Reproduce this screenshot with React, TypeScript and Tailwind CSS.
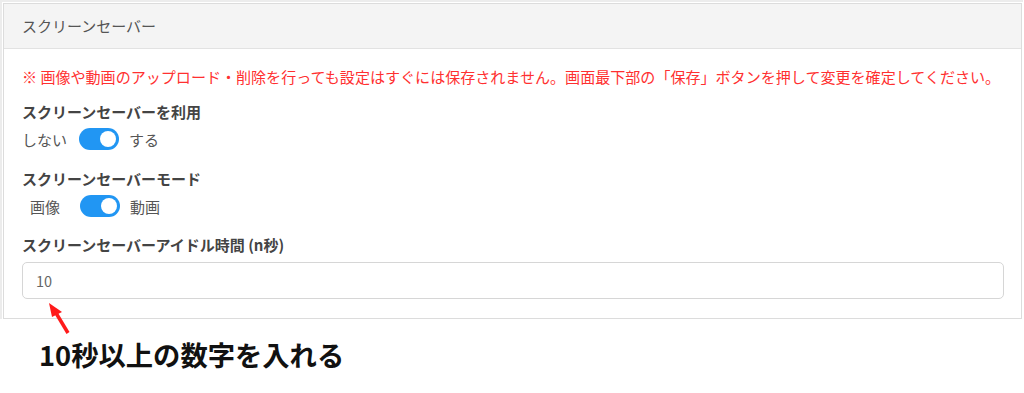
import React from 'react'

const jp = { fontFamily: '"Noto Sans CJK JP", "Noto Sans", sans-serif' }

function Toggle() {
  return (
    <span className="inline-flex items-center w-[40px] h-[22px] rounded-full bg-[#2196f3] px-[3px] justify-end">
      <span className="w-[16px] h-[16px] rounded-full bg-white" />
    </span>
  )
}

export default function App() {
  return (
    <div className="w-[1024px] h-[393px] bg-white text-[#444]" style={jp}>
      <div className="w-[1023px] border-2 border-[#ececec] border-r-0 border-b-0">
        <div className="border border-[#dcdcdc] w-[1019px] ml-[1px] mt-[1px]">
          <div className="h-[45px] bg-[#f4f4f4] border-b border-[#e2e2e2] flex items-center px-[18px] text-[15px] text-[#555]">
            スクリーンセーバー
          </div>
          <div className="px-[18px] pt-[17px] pb-[19px]">
            <p className="text-[15.05px] text-[#ff3030] leading-[22px] whitespace-nowrap">
              ※ 画像や動画のアップロード・削除を行っても設定はすぐには保存されません。画面最下部の「保存」ボタンを押して変更を確定してください。
            </p>
            <div className="mt-[14px] text-[15px] font-bold text-[#444] leading-[20px]">スクリーンセーバーを利用</div>
            <div className="mt-[6px] flex items-center text-[15px] text-[#555] h-[24px]">
              <span>しない</span>
              <span className="ml-[12px]"><Toggle /></span>
              <span className="ml-[10px]">する</span>
            </div>
            <div className="mt-[17px] text-[15px] font-bold text-[#444] leading-[20px]">スクリーンセーバーモード</div>
            <div className="mt-[6px] flex items-center text-[15px] text-[#555] h-[24px]">
              <span className="ml-[8px]">画像</span>
              <span className="ml-[20px]"><Toggle /></span>
              <span className="ml-[10px]">動画</span>
            </div>
            <div className="mt-[16px] text-[15px] font-bold text-[#444] leading-[20px]">スクリーンセーバーアイドル時間 (n秒)</div>
            <div className="mt-[7px] h-[37px] w-[982px] border border-[#d6d6d6] rounded-[5px] flex items-center px-[13px] text-[14.5px] text-[#666]">
              10
            </div>
          </div>
        </div>
      </div>
      <div className="relative h-[70px]">
        <svg className="absolute left-[44px] top-[-16px]" width="30" height="34" viewBox="0 0 30 34">
          <line x1="24" y1="30" x2="12" y2="10" stroke="#ff1a1a" strokeWidth="3.5" />
          <polygon points="5,0 18,9 8,14" fill="#ff1a1a" />
        </svg>
        <div className="absolute left-[39px] top-[17px] text-[27.3px] font-bold text-[#111] leading-[36px]">
          10秒以上の数字を入れる
        </div>
      </div>
    </div>
  )
}
